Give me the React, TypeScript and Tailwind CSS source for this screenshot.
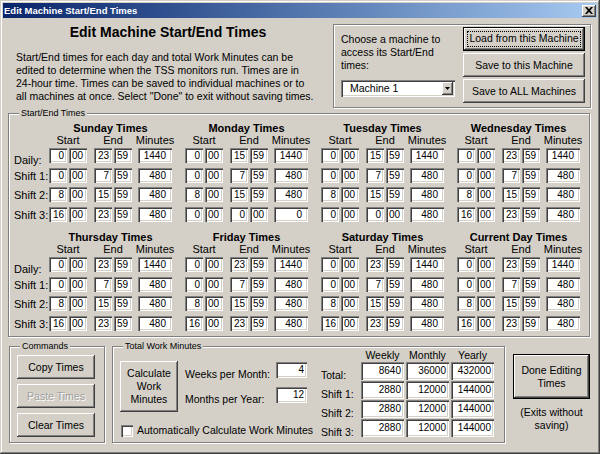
import React from "react";

type Row = [string, string, string, string, string];
const std: Row[] = [
  ["0", "00", "23", "59", "1440"],
  ["0", "00", "7", "59", "480"],
  ["8", "00", "15", "59", "480"],
  ["16", "00", "23", "59", "480"],
];
const mon: Row[] = [
  ["0", "00", "15", "59", "1440"],
  ["0", "00", "7", "59", "480"],
  ["8", "00", "15", "59", "480"],
  ["0", "00", "0", "00", "0"],
];
const tue: Row[] = [
  ["0", "00", "15", "59", "1440"],
  ["0", "00", "7", "59", "480"],
  ["8", "00", "15", "59", "480"],
  ["0", "00", "0", "00", "480"],
];

const topDays: [string, Row[]][] = [
  ["Sunday Times", std],
  ["Monday Times", mon],
  ["Tuesday Times", tue],
  ["Wednesday Times", std],
];
const bottomDays: [string, Row[]][] = [
  ["Thursday Times", std],
  ["Friday Times", std],
  ["Saturday Times", std],
  ["Current Day Times", std],
];
const rowMt = ["mt-0", "mt-[5px]", "mt-[4px]", "mt-[5px]"];
const rowLabels = ["Daily:", "Shift 1:", "Shift 2:", "Shift 3:"];

const sunken =
  "bg-white shadow-[inset_1px_1px_0_#808080,inset_2px_2px_0_#404040,inset_-1px_-1px_0_#ffffff,inset_-2px_-2px_0_#d4d0c8]";
const raised =
  "bg-[#d4d0c8] shadow-[inset_-1px_-1px_0_#404040,inset_1px_1px_0_#ffffff,inset_-2px_-2px_0_#808080,inset_2px_2px_0_#d4d0c8]";
const etched =
  "border border-[#808080] shadow-[inset_1px_1px_0_#ffffff,1px_1px_0_#ffffff]";

function Box({
  w,
  right,
  pad,
  children,
}: {
  w: string;
  right?: boolean;
  pad: string;
  children: React.ReactNode;
}) {
  return (
    <div
      className={`${w} h-full ${sunken} text-[10px] leading-[15px] whitespace-nowrap ${
        right ? "text-right" : "text-left"
      } ${pad}`}
    >
      {children}
    </div>
  );
}

function DayBlock({ title, rows }: { title: string; rows: Row[] }) {
  return (
    <div className="w-[123px] flex flex-col">
      <div className="h-[12px] leading-[12px] flex justify-center font-bold text-[11px] whitespace-nowrap">
        {title}
      </div>
      <div className="h-[12px] leading-[12px] flex text-[11px] whitespace-nowrap">
        <div className="w-[38px] flex justify-center">Start</div>
        <div className="w-[7px]" />
        <div className="w-[38px] flex justify-center">End</div>
        <div className="w-[6px]" />
        <div className="w-[34px] flex justify-center">Minutes</div>
      </div>
      <div className="mt-[2px] flex flex-col">
        {rows.map((r, i) => (
          <div key={i} className={`flex h-[15px] ${rowMt[i]}`}>
            <Box w="w-[18px]" right pad="pr-[3px]">
              {r[0]}
            </Box>
            <div className="w-[2px]" />
            <Box w="w-[18px]" pad="pl-[3px]">
              {r[1]}
            </Box>
            <div className="w-[7px]" />
            <Box w="w-[18px]" right pad="pr-[3px]">
              {r[2]}
            </Box>
            <div className="w-[2px]" />
            <Box w="w-[18px]" pad="pl-[3px]">
              {r[3]}
            </Box>
            <div className="w-[6px]" />
            <Box w="w-[34px]" right pad="pr-[6px]">
              {r[4]}
            </Box>
          </div>
        ))}
      </div>
    </div>
  );
}

function Half({ days }: { days: [string, Row[]][] }) {
  return (
    <div className="flex">
      <div className="w-[35px] pt-[26px] flex flex-col text-[11px]">
        {rowLabels.map((l, i) => (
          <div
            key={l}
            className={`h-[15px] leading-[15px] whitespace-nowrap ${rowMt[i]} ${
              i === 0 ? "translate-y-[5px]" : "translate-y-[1px]"
            }`}
          >
            {l}
          </div>
        ))}
      </div>
      <div className="flex gap-[13px]">
        {days.map(([t, r]) => (
          <DayBlock key={t} title={t} rows={r} />
        ))}
      </div>
    </div>
  );
}

function Caption({ children }: { children: React.ReactNode }) {
  return (
    <span className="absolute left-[10px] top-[-7px] px-[2px] bg-[#d4d0c8] text-[9px] leading-[12px] whitespace-nowrap">
      {children}
    </span>
  );
}

function Btn({
  w,
  h,
  children,
  disabled,
}: {
  w: string;
  h: string;
  children: React.ReactNode;
  disabled?: boolean;
}) {
  return (
    <div
      className={`${w} ${h} shrink-0 ${raised} flex items-center justify-center text-center text-[10.5px] leading-[13px] whitespace-nowrap ${
        disabled ? "text-[#a0a0a0] [text-shadow:1px_1px_0_#ffffff]" : ""
      }`}
    >
      {children}
    </div>
  );
}

const tableRows: [string, string, string, string][] = [
  ["Total:", "8640", "36000", "432000"],
  ["Shift 1:", "2880", "12000", "144000"],
  ["Shift 2:", "2880", "12000", "144000"],
  ["Shift 3:", "2880", "12000", "144000"],
];

export default function App() {
  return (
    <div className="w-[600px] h-[454px] bg-[#d4d0c8] p-[3px] text-black font-['Liberation_Sans',Arial,sans-serif] shadow-[inset_-1px_-1px_0_#404040,inset_1px_1px_0_#d4d0c8,inset_-2px_-2px_0_#808080,inset_2px_2px_0_#ffffff] flex flex-col overflow-hidden">
      {/* Title bar */}
      <div className="h-[15px] shrink-0 flex items-center justify-between bg-linear-to-r from-[#0a246a] to-[#a6caf0]">
        <span className="pl-[1px] text-white font-bold text-[9.5px] leading-[15px] whitespace-nowrap">
          Edit Machine Start/End Times
        </span>
        <div className={`w-[14px] h-[12px] mr-[1px] ${raised} flex items-center justify-center`}>
          <svg width="8" height="7" viewBox="0 0 8 7">
            <path
              d="M0 0 H2 L4 2.3 L6 0 H8 L5.2 3.5 L8 7 H6 L4 4.7 L2 7 H0 L2.8 3.5 Z"
              fill="#000"
            />
          </svg>
        </div>
      </div>

      {/* Top section */}
      <div className="flex h-[90px] shrink-0">
        <div className="w-[330px] shrink-0">
          <div className="mt-[6px] h-[17px] leading-[17px] text-center font-bold text-[14px] whitespace-nowrap">
            Edit Machine Start/End Times
          </div>
          <p className="mt-[10px] pl-[13px] text-[10.5px] leading-[13px] whitespace-nowrap">
            Start/End times for each day and total Work Minutes can be
            <br />
            edited to determine when the TSS monitors run. Times are in
            <br />
            24-hour time. Times can be saved to individual machines or to
            <br />
            all machines at once. Select "Done" to exit without saving times.
          </p>
        </div>
        <div className={`mt-[6px] w-[258px] h-[84px] shrink-0 ${etched} flex`}>
          <div className="pl-[7px] pt-[8px] flex flex-col">
            <div className="text-[10.5px] leading-[13px] whitespace-nowrap">
              Choose a machine to
              <br />
              access its Start/End
              <br />
              times:
            </div>
            <div className={`mt-[8px] w-[114px] h-[17px] ${sunken} flex items-center justify-between pl-[9px] pr-[2px]`}>
              <span className="text-[10.5px] leading-[13px] whitespace-nowrap">Machine 1</span>
              <div className={`w-[11px] h-[13px] ${raised} flex items-center justify-center`}>
                <svg width="5" height="3" viewBox="0 0 5 3">
                  <path d="M0 0 H5 L2.5 3 Z" fill="#000" />
                </svg>
              </div>
            </div>
          </div>
          <div className="ml-auto pr-[5px] pt-[2px] flex flex-col gap-[2px]">
            <div
              className={`relative w-[122px] h-[24px] border border-black ${raised} flex items-center justify-center text-[10.5px] whitespace-nowrap`}
            >
              Load from this Machine
              <div className="absolute inset-[3px] border border-dotted border-black" />
            </div>
            <Btn w="w-[122px]" h="h-[24px]">
              Save to this Machine
            </Btn>
            <Btn w="w-[122px]" h="h-[24px]">
              Save to ALL Machines
            </Btn>
          </div>
        </div>
      </div>

      {/* Start/End Times group */}
      <div className={`relative ml-[5px] mt-[5px] w-[582px] h-[224px] shrink-0 ${etched} pl-[5px] pt-[8px] flex flex-col`}>
        <Caption>Start/End Times</Caption>
        <Half days={topDays} />
        <div className="mt-[9px]">
          <Half days={bottomDays} />
        </div>
      </div>

      {/* Bottom section */}
      <div className="flex mt-[9px] ml-[6px] shrink-0">
        <div className={`relative w-[96px] h-[97px] shrink-0 ${etched} pl-[7px] pt-[8px] flex flex-col gap-[5px]`}>
          <Caption>Commands</Caption>
          <Btn w="w-[78px]" h="h-[24px]">
            Copy Times
          </Btn>
          <Btn w="w-[78px]" h="h-[24px]" disabled>
            Paste Times
          </Btn>
          <Btn w="w-[78px]" h="h-[24px]">
            Clear Times
          </Btn>
        </div>

        <div className={`relative ml-[7px] w-[393px] h-[97px] shrink-0 ${etched} flex`}>
          <Caption>Total Work Minutes</Caption>
          <div className="w-[194px] shrink-0 pl-[7px] pt-[14px] flex flex-col">
            <div className="flex">
              <Btn w="w-[58px]" h="h-[51px]">
                Calculate
                <br />
                Work
                <br />
                Minutes
              </Btn>
              <div className="ml-[7px] flex flex-col">
                <div className="mt-[1px] flex h-[16px]">
                  <div className="w-[91px] shrink-0 text-[10.5px] leading-[16px] translate-y-[4px] whitespace-nowrap">
                    Weeks per Month:
                  </div>
                  <div className={`w-[31px] h-[16px] shrink-0 ${sunken} text-right pr-[3px] text-[10px] leading-[16px]`}>4</div>
                </div>
                <div className="mt-[9px] flex h-[16px]">
                  <div className="w-[91px] shrink-0 text-[10.5px] leading-[16px] translate-y-[4px] whitespace-nowrap">
                    Months per Year:
                  </div>
                  <div className={`w-[31px] h-[16px] shrink-0 ${sunken} text-right pr-[3px] text-[10px] leading-[16px]`}>12</div>
                </div>
              </div>
            </div>
            <div className="mt-[12px] w-[187px] flex items-center">
              <div className={`ml-[1px] w-[12px] h-[12px] shrink-0 ${sunken}`} />
              <span className="ml-[4px] text-[10.5px] leading-[13px] whitespace-nowrap">
                Automatically Calculate Work Minutes
              </span>
            </div>
          </div>

          <div className="ml-[14px] pt-[2px] flex flex-col shrink-0">
            <div className="flex h-[12px] text-[10.5px] leading-[12px] whitespace-nowrap">
              <div className="w-[40px]" />
              <div className="w-[43px] flex justify-center">Weekly</div>
              <div className="w-[2px]" />
              <div className="w-[43px] flex justify-center">Monthly</div>
              <div className="w-[2px]" />
              <div className="w-[43px] flex justify-center">Yearly</div>
            </div>
            <div className="mt-[1px] flex flex-col gap-[1px]">
              {tableRows.map((r) => (
                <div key={r[0]} className="flex h-[18px]">
                  <div className="w-[40px] text-[10.5px] leading-[18px] translate-y-[4px] whitespace-nowrap">
                    {r[0]}
                  </div>
                  <div className={`w-[43px] h-[18px] ${sunken} text-right pr-[3px] text-[10px] leading-[18px]`}>{r[1]}</div>
                  <div className="w-[2px]" />
                  <div className={`w-[43px] h-[18px] ${sunken} text-right pr-[3px] text-[10px] leading-[18px]`}>{r[2]}</div>
                  <div className="w-[2px]" />
                  <div className={`w-[43px] h-[18px] ${sunken} text-right pr-[3px] text-[10px] leading-[18px]`}>{r[3]}</div>
                </div>
              ))}
            </div>
          </div>
        </div>

        <div className="ml-[8px] mt-[8px] flex flex-col items-center shrink-0">
          <div
            className={`w-[77px] h-[45px] border border-black ${raised} flex items-center justify-center text-center text-[10.5px] leading-[13px] whitespace-nowrap`}
          >
            Done Editing
            <br />
            Times
          </div>
          <div className="mt-[7px] text-center text-[10.5px] leading-[13px] whitespace-nowrap">
            (Exits without
            <br />
            saving)
          </div>
        </div>
      </div>
    </div>
  );
}
